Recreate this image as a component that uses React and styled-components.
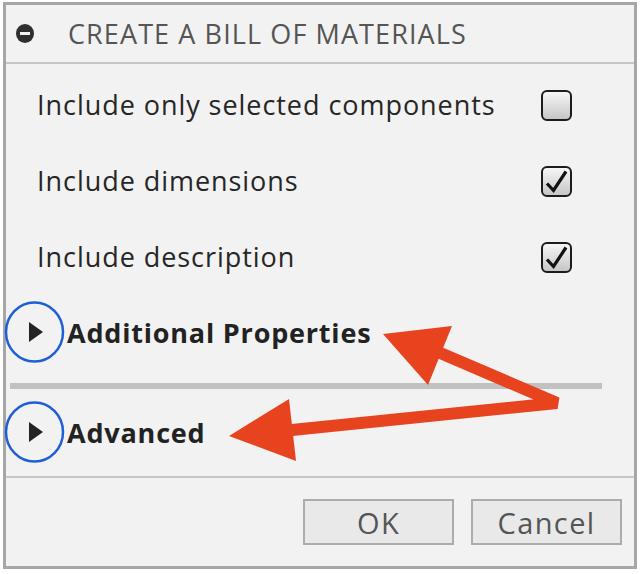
import React from "react";
import styled, { createGlobalStyle } from "styled-components";

const Global = createGlobalStyle`
  html, body { margin: 0; padding: 0; background: #ffffff; }
  body { font-family: "Open Sans", "Noto Sans", sans-serif; }
`;

const Page = styled.div`
  position: relative;
  width: 640px;
  height: 574px;
  padding: 2px 3px 0 3px;
  box-sizing: border-box;
`;

const Dialog = styled.div`
  width: 634px;
  height: 567px;
  box-sizing: border-box;
  border: 3px solid #a6a6a6;
  background: #f2f2f2;
  display: flex;
  flex-direction: column;
`;

const Header = styled.div`
  height: 57px;
  border-bottom: 2px solid #c6c6c6;
  display: flex;
  align-items: center;
  padding-left: 10px;
  gap: 34px;
  flex-shrink: 0;
`;

const CollapseIcon = styled.span`
  width: 18px;
  height: 19px;
  border-radius: 50%;
  background: #2f2f2f;
  display: flex;
  align-items: center;
  justify-content: center;
  &::after {
    content: "";
    width: 10px;
    height: 3px;
    background: #f2f2f2;
  }
`;

const Title = styled.span`
  font-size: 27px;
  color: #555555;
  letter-spacing: 1.1px;
  line-height: 1;
`;

const Body = styled.div`
  flex: none;
  padding: 3px 0 7px 0;
  display: flex;
  flex-direction: column;
  border-bottom: 2px solid #c6c6c6;
`;

const OptionRow = styled.div`
  height: 76px;
  display: flex;
  align-items: center;
  justify-content: space-between;
  padding: 0 62px 0 31px;
`;

const Label = styled.span`
  font-size: 27px;
  color: #262626;
  letter-spacing: 0.95px;
  line-height: 1;
  margin-top: -2px;
`;

const Box = styled.span`
  width: 31px;
  height: 31px;
  box-sizing: border-box;
  border: 2px solid #1c1c1c;
  border-radius: 6px;
  background: linear-gradient(#f6f6f6, #c6c6c6);
  display: flex;
  align-items: center;
  justify-content: center;
`;

const ExpandRow = styled.div`
  height: 74px;
  display: flex;
  align-items: center;
  padding-left: 23px;
  gap: 24px;
`;

const Triangle = styled.span`
  width: 0;
  height: 0;
  border-top: 10px solid transparent;
  border-bottom: 10px solid transparent;
  border-left: 14px solid #232323;
`;

const Section = styled.span`
  font-size: 27px;
  font-weight: 700;
  color: #222222;
  letter-spacing: 0.8px;
  line-height: 1;
`;

const Divider = styled.div`
  height: 6px;
  background: #c1c1c1;
  margin: 14px 0 6px 4px;
  width: 592px;
`;

const Footer = styled.div`
  flex: 1;
  display: flex;
  justify-content: flex-end;
  align-items: flex-start;
  padding: 21px 12px 0 0;
  gap: 17px;
`;

const Button = styled.button`
  width: 151px;
  height: 46px;
  box-sizing: border-box;
  border: 2px solid #acacac;
  background: #e9e9e9;
  font-family: "Open Sans", "Noto Sans", sans-serif;
  font-size: 29px;
  color: #555555;
  letter-spacing: 1.4px;
  padding: 0;
  line-height: 1;
`;

const Overlay = styled.svg`
  position: absolute;
  left: 0;
  top: 0;
  pointer-events: none;
`;

const Check = () => (
  <svg width="27" height="27" viewBox="0 0 27 27">
    <path d="M4 15.5 L10.5 22.5 L23 3.5" fill="none" stroke="#111" strokeWidth="3.2" strokeLinejoin="miter" />
  </svg>
);

const options = [
  { label: "Include only selected components", checked: false },
  { label: "Include dimensions", checked: true },
  { label: "Include description", checked: true },
];

export default function App() {
  return (
    <>
      <Global />
      <Page>
        <Dialog>
          <Header>
            <CollapseIcon />
            <Title>CREATE A BILL OF MATERIALS</Title>
          </Header>
          <Body>
            {options.map((o) => (
              <OptionRow key={o.label}>
                <Label>{o.label}</Label>
                <Box>{o.checked && <Check />}</Box>
              </OptionRow>
            ))}
            <ExpandRow>
              <Triangle />
              <Section>Additional Properties</Section>
            </ExpandRow>
            <Divider />
            <ExpandRow>
              <Triangle />
              <Section>Advanced</Section>
            </ExpandRow>
          </Body>
          <Footer>
            <Button>OK</Button>
            <Button>Cancel</Button>
          </Footer>
        </Dialog>
        <Overlay width="640" height="574" viewBox="0 0 640 574">
          <ellipse cx="34.5" cy="332" rx="28.5" ry="29.5" fill="none" stroke="#1f5fd6" strokeWidth="2.5" />
          <ellipse cx="34.5" cy="432" rx="28.5" ry="29.5" fill="none" stroke="#1f5fd6" strokeWidth="2.5" />
          <path d="M438 352 L557 403 L292 430" fill="none" stroke="#e8431f" strokeWidth="12" strokeLinejoin="bevel" />
          <polygon points="383,334 452,326 428,385" fill="#e8431f" />
          <polygon points="229,436 289,399 296,461" fill="#e8431f" />
        </Overlay>
      </Page>
    </>
  );
}
